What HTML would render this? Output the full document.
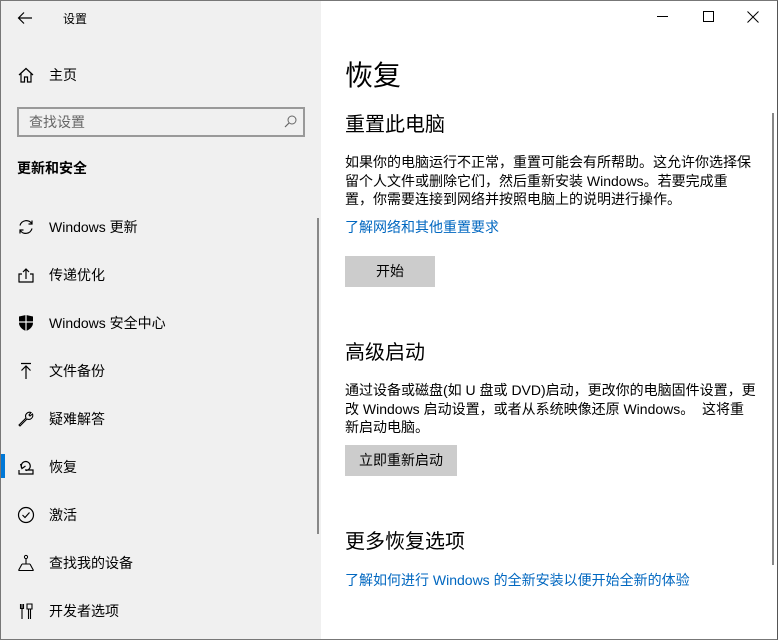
<!DOCTYPE html>
<html><head><meta charset="utf-8"><style>
*{margin:0;padding:0;box-sizing:border-box}
body{width:778px;height:640px;overflow:hidden;background:#fff;font-family:"Liberation Sans","Noto Sans CJK SC",sans-serif;color:#000;position:relative}
.a{position:absolute;white-space:nowrap}
#side{position:absolute;left:0;top:0;width:321px;height:640px;background:#f0f0f0;border-left:1px solid #777;border-top:1px solid #777;border-bottom:1px solid #777}
#main{position:absolute;left:321px;top:0;width:457px;height:640px;border-top:1px solid #777;border-right:1px solid #555;border-bottom:1px solid #777}
.it{position:absolute;left:48px;font-size:14px;line-height:20px;color:#000}
.ic{position:absolute;left:16px;width:18px;height:18px}
.p{position:absolute;left:345px;font-size:14px;line-height:18.5px;color:#000;white-space:nowrap}
.h{position:absolute;left:345px;font-size:20px;color:#000}
.lk{position:absolute;left:345px;font-size:14px;color:#0067c0}
.btn{position:absolute;left:345px;height:31px;background:#cccccc;font-size:14px;line-height:31px;text-align:center}
</style></head><body>
<div id="side">
<svg class="a" style="left:16px;top:10px" width="16" height="14" viewBox="0 0 16 14"><path d="M15 7H2M7 1.5L1.5 7 7 12.5" fill="none" stroke="#000" stroke-width="1.2"/></svg>
<div class="a" style="left:62px;top:9px;font-size:12px">设置</div>
<svg class="ic" style="top:65px" viewBox="0 0 18 18"><path d="M2 9L9 2.5 16 9M4 7.5V16H7.5V11H10.5V16H14V7.5" fill="none" stroke="#000" stroke-width="1.2"/></svg>
<div class="it" style="top:64px">主页</div>
<div class="a" style="left:16px;top:106px;width:288px;height:30px;border:2px solid #999;background:#f0f0f0"></div>
<div class="a" style="left:28px;top:111px;font-size:14px;color:#666">查找设置</div>
<svg class="a" style="left:282px;top:113px" width="15" height="15" viewBox="0 0 15 15"><circle cx="9" cy="6" r="4" fill="none" stroke="#666"/><path d="M6 9L2 13" stroke="#666" stroke-width="1.2"/></svg>
<div class="a" style="left:16px;top:157px;font-size:14px;font-weight:bold">更新和安全</div>
<div class="a" style="left:316px;top:217px;width:2px;height:316px;background:#888"></div>

<svg class="ic" style="top:217px" viewBox="0 0 18 18"><path d="M3 7.5A6.5 6.5 0 0 1 15 6M15 10.5A6.5 6.5 0 0 1 3 12" fill="none" stroke="#000" stroke-width="1.2"/><path d="M15 2.5V6H11.5M3 15.5V12H6.5" fill="none" stroke="#000" stroke-width="1.2"/></svg>
<div class="it" style="top:216px">Windows 更新</div>
<svg class="ic" style="top:265px" viewBox="0 0 18 18"><path d="M1.5 16H16.5M2 16V8H5M16 16V8H13M9 13V3M6 6L9 3 12 6" fill="none" stroke="#000" stroke-width="1.2"/></svg>
<div class="it" style="top:264px">传递优化</div>
<svg class="ic" style="top:313px" viewBox="0 0 18 18"><path d="M2 2.5L9 1 16 2.5V9C16 13 12 16 9 17 6 16 2 13 2 9Z" fill="#000"/><path d="M9 1V17M2 8H16" stroke="#f0f0f0" stroke-width="1.2"/></svg>
<div class="it" style="top:312px">Windows 安全中心</div>
<svg class="ic" style="top:361px" viewBox="0 0 18 18"><path d="M4 1.5H14M9 17V4M4.5 8.5L9 4 13.5 8.5" fill="none" stroke="#000" stroke-width="1.2"/></svg>
<div class="it" style="top:360px">文件备份</div>
<svg class="ic" style="top:409px" viewBox="0 0 18 18"><path d="M2 15L9 8A4 4 0 0 1 14 2.5L12 5 13 6 15.5 4A4 4 0 0 1 10 9L3 16Z" fill="none" stroke="#000" stroke-width="1.1"/></svg>
<div class="it" style="top:408px">疑难解答</div>
<div class="a" style="left:0;top:453px;width:4px;height:24px;background:#0078d7"></div>
<svg class="ic" style="top:457px" viewBox="0 0 18 18"><path d="M2 12V16H16V12H8M5 10.5A4.5 4.5 0 1 1 9 12.5M3.5 6L5 10.5 8.5 8" fill="none" stroke="#000" stroke-width="1.2"/></svg>
<div class="it" style="top:456px">恢复</div>
<svg class="ic" style="top:505px" viewBox="0 0 18 18"><circle cx="9" cy="9" r="7.5" fill="none" stroke="#000" stroke-width="1.2"/><path d="M5.5 9L8 11.5 12.5 6.5" fill="none" stroke="#000" stroke-width="1.2"/></svg>
<div class="it" style="top:504px">激活</div>
<svg class="ic" style="top:553px" viewBox="0 0 18 18"><circle cx="9" cy="3" r="1.6" fill="none" stroke="#000"/><path d="M9 4.5V10M5 10H13M1.5 16.5L5 10M16.5 16.5L13 10M1.5 16.5H16.5" fill="none" stroke="#000" stroke-width="1.1"/></svg>
<div class="it" style="top:552px">查找我的设备</div>
<svg class="ic" style="top:601px" viewBox="0 0 18 18"><path d="M5 2V17M3.5 2V6.5H6.5V2M11.5 7V17M13.5 7V17M10 2H15V7H10Z" fill="none" stroke="#000" stroke-width="1.1"/></svg>
<div class="it" style="top:600px">开发者选项</div>
</div>
<div id="main"></div>
<div class="a" style="left:657px;top:16px;width:11px;height:1px;background:#000"></div>
<div class="a" style="left:703px;top:11px;width:11px;height:11px;border:1px solid #000"></div>
<svg class="a" style="left:747px;top:11px" width="12" height="12" viewBox="0 0 12 12"><path d="M0.5 0.5L11.5 11.5M11.5 0.5L0.5 11.5" stroke="#000" stroke-width="1"/></svg>
<div class="a" style="left:772px;top:113px;width:2px;height:452px;background:#888"></div>

<div class="a" style="left:345px;top:54px;font-size:28px">恢复</div>
<div class="h" style="top:108px">重置此电脑</div>
<div class="p" style="top:153px">如果你的电脑运行不正常，重置可能会有所帮助。这允许你选择保<br>留个人文件或删除它们，然后重新安装 Windows。若要完成重<br>置，你需要连接到网络并按照电脑上的说明进行操作。</div>
<div class="lk" style="top:217px">了解网络和其他重置要求</div>
<div class="btn" style="top:256px;width:90px">开始</div>
<div class="h" style="top:336px">高级启动</div>
<div class="p" style="top:381px">通过设备或磁盘(如 U 盘或 DVD)启动，更改你的电脑固件设置，更<br>改 Windows 启动设置，或者从系统映像还原 Windows。&nbsp; 这将重<br>新启动电脑。</div>
<div class="btn" style="top:445px;width:112px">立即重新启动</div>
<div class="h" style="top:525px">更多恢复选项</div>
<div class="lk" style="top:570px">了解如何进行 Windows 的全新安装以便开始全新的体验</div>
</body></html>
